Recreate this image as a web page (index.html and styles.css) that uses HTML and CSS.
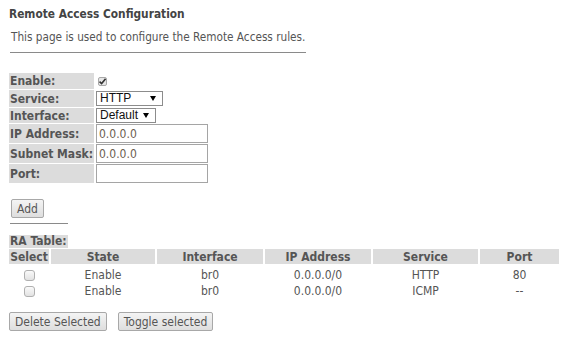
FILE: index.html
```html
<!DOCTYPE html>
<html>
<head>
<meta charset="utf-8">
<title>Remote Access Configuration</title>
<link rel="stylesheet" href="styles.css">
</head>
<body>
<div class="page">
  <h1 class="title">Remote Access Configuration</h1>
  <p class="intro">This page is used to configure the Remote Access rules.</p>
  <hr class="rule rule-long">

  <table class="form">
    <tr class="r-chk"><th>Enable:</th><td><input type="checkbox" class="chk-on" checked></td></tr>
    <tr class="r-sel1"><th>Service:</th><td><select class="sel sel-svc"><option>HTTP</option></select></td></tr>
    <tr class="r-sel2"><th>Interface:</th><td><select class="sel sel-if"><option>Default</option></select></td></tr>
    <tr class="r-in"><th>IP Address:</th><td><input type="text" class="txt" value="0.0.0.0"></td></tr>
    <tr class="r-in"><th>Subnet Mask:</th><td><input type="text" class="txt" value="0.0.0.0"></td></tr>
    <tr class="r-in"><th>Port:</th><td><input type="text" class="txt" value=""></td></tr>
  </table>

  <div class="add-row"><button class="btn">Add</button></div>
  <hr class="rule rule-short">

  <div class="ra-label">RA Table:</div>
  <table class="ra">
    <thead>
      <tr>
        <th class="c-sel">Select</th>
        <th class="c-state">State</th>
        <th class="c-if">Interface</th>
        <th class="c-ip">IP Address</th>
        <th class="c-svc">Service</th>
        <th class="c-port">Port</th>
      </tr>
    </thead>
    <tbody>
      <tr class="first">
        <td><input type="checkbox" class="chk-row"></td>
        <td>Enable</td><td>br0</td><td>0.0.0.0/0</td><td>HTTP</td><td>80</td>
      </tr>
      <tr>
        <td><input type="checkbox" class="chk-row"></td>
        <td>Enable</td><td>br0</td><td>0.0.0.0/0</td><td>ICMP</td><td>--</td>
      </tr>
    </tbody>
  </table>

  <div class="actions">
    <button class="btn">Delete Selected</button>
    <button class="btn">Toggle selected</button>
  </div>
</div>
</body>
</html>
```

FILE: styles.css
```css
html, body {
  margin: 0;
  padding: 0;
  background: #ffffff;
}

body {
  font-family: "DejaVu Sans Condensed", "DejaVu Sans", sans-serif;
  font-size: 12px;
  color: #555555;
}

.page {
  padding: 7px 0 0 9px;
}

.title {
  margin: 0;
  font-size: 11.8px;
  line-height: 14px;
  font-weight: bold;
  color: #444444;
}

.intro {
  margin: 9px 0 0 2px;
  font-size: 11.7px;
  line-height: 14px;
  color: #555555;
}

.rule {
  border: 0;
  height: 0;
  border-top: 1px solid #8a8a8a;
  margin: 0;
}

.rule-long {
  width: 296px;
  margin: 8px 0 0 1px;
}

.form {
  border-collapse: separate;
  border-spacing: 0 1px;
  margin: 19px 0 0 0;
}

.form th {
  width: 84px;
  padding: 0 0 0 1px;
  background: #dcdcdc;
  text-align: left;
  font-weight: bold;
  font-size: 12px;
  line-height: 14px;
  color: #555555;
  white-space: nowrap;
}

.form td {
  padding: 0 0 0 2px;
  font-size: 12px;
  line-height: 14px;
}

.r-chk th, .r-chk td { height: 16px; }
.r-sel1 th, .r-sel1 td { height: 17px; }
.r-sel2 th, .r-sel2 td { height: 15px; }
.r-in th, .r-in td { height: 19px; }

.chk-on {
  appearance: none;
  -webkit-appearance: none;
  display: block;
  width: 9px;
  height: 9px;
  margin: 0 0 0 2px;
  border: 1px solid #a8a8a8;
  border-radius: 2px;
  background: #e6e6e6 url("data:image/svg+xml;utf8,<svg xmlns='http://www.w3.org/2000/svg' width='9' height='9' viewBox='0 0 9 9'><path d='M1.5 4.6 L3.6 6.6 L7.6 1.8' fill='none' stroke='%23333' stroke-width='1.6'/></svg>") no-repeat center;
}

.sel {
  appearance: none;
  -webkit-appearance: none;
  display: block;
  box-sizing: border-box;
  height: 15px;
  margin: 0;
  padding: 0 0 0 3px;
  border: 1px solid #8c8c8c;
  border-radius: 0;
  font-family: "Liberation Sans", Arial, sans-serif;
  font-size: 12px;
  line-height: 13px;
  color: #111111;
  background: #ffffff url("data:image/svg+xml;utf8,<svg xmlns='http://www.w3.org/2000/svg' width='6' height='5' viewBox='0 0 6 5'><path d='M0 0 L6 0 L3 5 Z' fill='%23000'/></svg>") no-repeat right 6px center;
}

.sel-svc { width: 67px; }
.sel-if { width: 60px; }

.txt {
  display: block;
  box-sizing: border-box;
  width: 112px;
  height: 19px;
  margin: 0;
  padding: 0 2px;
  border: 1px solid #a5a5a5;
  border-radius: 0;
  font-family: "DejaVu Sans Condensed", sans-serif;
  font-size: 12px;
  color: #6b5e50;
  background: #ffffff;
}

.btn {
  box-sizing: border-box;
  height: 19px;
  margin: 0;
  padding: 0 5px;
  border: 1px solid #a8a8a8;
  border-radius: 2px;
  background: linear-gradient(#f4f4f4, #dedede);
  font-family: "DejaVu Sans Condensed", sans-serif;
  font-size: 12px;
  color: #555555;
}

.add-row {
  margin: 15px 0 0 2px;
}

.rule-short {
  width: 58px;
  margin: 5px 0 0 1px;
}

.ra-label {
  display: inline-block;
  margin-top: 11px;
  padding: 0 1px;
  background: #dcdcdc;
  font-weight: bold;
  line-height: 13px;
  color: #555555;
}

.ra {
  border-collapse: separate;
  border-spacing: 2px 0;
  margin: 1px 0 0 -2px;
}

.ra th {
  height: 15px;
  padding: 0;
  background: #dcdcdc;
  font-weight: bold;
  font-size: 12px;
  line-height: 14px;
  color: #555555;
  text-align: center;
}

.ra td {
  height: 16px;
  padding: 0;
  font-size: 12px;
  line-height: 14px;
  text-align: center;
  color: #555555;
}

.ra .first td {
  padding-top: 3px;
}

.c-sel { width: 40px; }
.c-state { width: 104px; }
.c-if { width: 106px; }
.c-ip { width: 106px; }
.c-svc { width: 105px; }
.c-port { width: 79px; }

.chk-row {
  appearance: none;
  -webkit-appearance: none;
  display: inline-block;
  vertical-align: middle;
  width: 11px;
  height: 11px;
  margin: 0;
  border: 1px solid #b0b0b0;
  border-radius: 3px;
  background: linear-gradient(#fafafa, #e2e2e2);
}

.actions {
  display: flex;
  gap: 11px;
  margin: 13px 0 0 0;
}
```
